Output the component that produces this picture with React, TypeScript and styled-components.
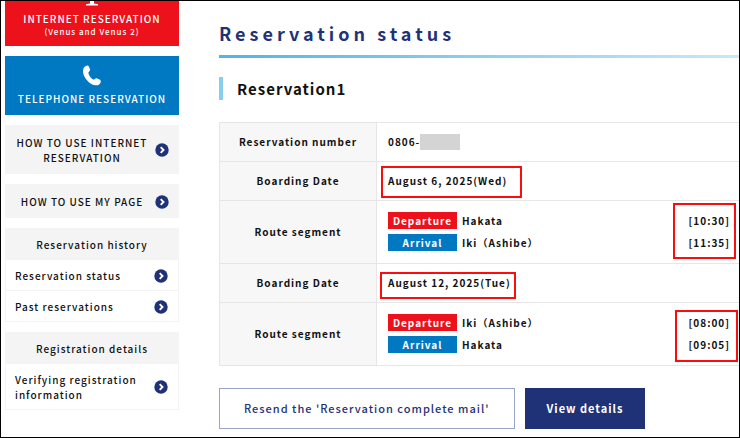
import React from "react";
import styled, { createGlobalStyle } from "styled-components";

const navy = "#1f3278";
const red = "#ec111a";
const blue = "#0079c2";
const grey = "#f4f4f4";
const line = "#e6e6e6";

const GlobalStyle = createGlobalStyle`
  *, *::before, *::after { box-sizing: border-box; }
  body {
    margin: 0;
    background: #fff;
    color: #111;
    font-family: "Noto Sans CJK JP", "Noto Sans", sans-serif;
    font-size: 10px;
    font-weight: 500;
    line-height: 15px;
    letter-spacing: 1px;
  }
  h1, h2, h3, ul { margin: 0; padding: 0; }
  a { color: inherit; text-decoration: none; }
`;

const Frame = styled.div`
  display: flex;
  gap: 40px;
  height: 100vh;
  padding-left: 4px;
  overflow: hidden;
  border: 1px solid #000;
`;

const Sidebar = styled.nav`
  display: flex;
  flex: none;
  flex-direction: column;
  gap: 10px;
  width: 174px;
`;

const Banner = styled.a<{ $color: string; $top: number }>`
  display: flex;
  flex-direction: column;
  align-items: center;
  gap: 5px;
  padding: ${(p) => p.$top}px 0 9px;
  background: ${(p) => p.$color};
  color: #fff;
  text-align: center;
  white-space: nowrap;
`;

const BannerNote = styled.small`
  display: block;
  font-size: 8px;
  line-height: 11px;
`;

const HelpLink = styled.a`
  display: flex;
  align-items: center;
  gap: 6px;
  padding: 10px 10px 9px;
  background: ${grey};
  text-align: center;
`;

const HelpText = styled.span`
  flex: 1;
`;

const MenuGroup = styled.section`
  border: 1px solid ${grey};
`;

const MenuTitle = styled.h3`
  padding: 8px 0;
  background: ${grey};
  font-size: 10px;
  font-weight: 500;
  text-align: center;
`;

const MenuList = styled.ul`
  list-style: none;
`;

const MenuItem = styled.li`
  & + & { border-top: 1px solid ${grey}; }
`;

const MenuLink = styled.a`
  display: flex;
  align-items: center;
  justify-content: space-between;
  padding: 8px 10px 7px 9px;
`;

const ArrowSvg = styled.svg`
  flex: none;
`;

const Main = styled.main`
  flex: 1;
  min-width: 0;
  padding-top: 18px;
`;

const Title = styled.h1`
  padding-bottom: 8px;
  border-bottom: 3px solid;
  border-image: linear-gradient(90deg, #4fb4e8, #c9e8f8) 1;
  color: ${navy};
  font-size: 18px;
  font-weight: 700;
  line-height: 28px;
  letter-spacing: 4px;
`;

const Subtitle = styled.h2`
  margin: 19px 0 22px;
  padding-left: 14px;
  border-left: 4px solid #87ceee;
  font-size: 15px;
  font-weight: 700;
  line-height: 23px;
`;

const Details = styled.table`
  width: 100%;
  border-collapse: collapse;
  border: 1px solid ${line};
  border-right: 0;
`;

const Label = styled.th`
  width: 157px;
  padding: 0 0 2px;
  border: 1px solid ${line};
  background: #f7f7f7;
  font-weight: 700;
`;

const Value = styled.td<{ $tall?: boolean }>`
  padding: ${(p) => (p.$tall ? 11 : 10)}px 9px ${(p) => (p.$tall ? 12 : 11)}px 11px;
  border-top: 1px solid ${line};
  border-bottom: 1px solid ${line};
  font-weight: 700;
  line-height: 17px;
`;

const Code = styled.div`
  display: flex;
  align-items: center;
`;

const Masked = styled.span`
  width: 40px;
  height: 16px;
  background: #d5d4d5;
`;

const Segment = styled.div`
  display: flex;
  justify-content: space-between;
`;

const Stops = styled.div`
  display: grid;
  gap: 5px;
`;

const Stop = styled.div`
  display: flex;
  gap: 5px;
`;

const Badge = styled.span<{ $color: string }>`
  width: 69px;
  background: ${(p) => p.$color};
  color: #fff;
  text-align: center;
`;

const Marked = styled.div`
  position: relative;
  width: fit-content;
`;

const Times = styled(Marked)`
  display: grid;
  gap: 5px;
`;

const Mark = styled.span<{ $inset: string }>`
  position: absolute;
  inset: ${(p) => p.$inset};
  border: 2px solid #fb0d0d;
`;

const Actions = styled.div`
  display: flex;
  gap: 10px;
  margin-top: 22px;
`;

const Button = styled.button<{ $filled?: boolean }>`
  padding: 0 ${(p) => (p.$filled ? 21 : 24)}px;
  border: 1px solid ${(p) => (p.$filled ? navy : "#9aa3c8")};
  background: ${(p) => (p.$filled ? navy : "#fff")};
  color: ${(p) => (p.$filled ? "#fff" : navy)};
  font: inherit;
  font-size: 11px;
  font-weight: ${(p) => (p.$filled ? 700 : 500)};
  line-height: 39px;
  letter-spacing: inherit;
  white-space: nowrap;
`;

const Arrow = () => (
  <ArrowSvg width="14" height="14" viewBox="0 0 14 14" aria-hidden="true">
    <circle cx="7" cy="7" r="6.7" fill={navy} />
    <path d="M5.7 4.2 8.5 7 5.7 9.8" fill="none" stroke="#fff" strokeWidth="1.9" />
  </ArrowSvg>
);

const StandIcon = () => (
  <svg width="14" height="5" viewBox="0 0 14 5" aria-hidden="true">
    <path d="M5 0h4v2.400l4 .8V4.500H1V3.200l4-.8z" fill="#fff" />
  </svg>
);

const PhoneIcon = () => (
  <svg width="20" height="21" viewBox="0 0 20 21" aria-hidden="true">
    <path
      d="M4 .9Q5.800 0 6.900 1.400L8 4.200Q8.300 5.600 7 6.700Q6.100 7.400 6.500 8.700Q7.600 12 10.600 14.200Q11.700 15 12.600 14.200Q13.900 13 15.300 13.500L18 14.700Q19.400 15.700 18.600 17.400Q17.300 20.500 13.800 20.300C7.800 19.900 1.200 12.800 1 6.200Q.9 2.300 4 .9z"
      fill="#fff"
    />
  </svg>
);

type Leg = { from: string; to: string; departs: string; arrives: string; mark: string };

const Route = ({ leg }: { leg: Leg }) => (
  <tr>
    <Label scope="row">Route segment</Label>
    <Value $tall>
      <Segment>
        <Stops>
          <Stop>
            <Badge $color={red}>Departure</Badge>
            {leg.from}
          </Stop>
          <Stop>
            <Badge $color={blue}>Arrival</Badge>
            {leg.to}
          </Stop>
        </Stops>
        <Times>
          <span>[{leg.departs}]</span>
          <span>[{leg.arrives}]</span>
          <Mark $inset={leg.mark} />
        </Times>
      </Segment>
    </Value>
  </tr>
);

const Boarding = ({ date, mark }: { date: string; mark: string }) => (
  <tr>
    <Label scope="row">Boarding Date</Label>
    <Value>
      <Marked>
        {date}
        <Mark $inset={mark} />
      </Marked>
    </Value>
  </tr>
);

export default function App() {
  return (
    <>
      <GlobalStyle />
      <Frame>
        <Sidebar>
          <Banner href="#internet" $color={red} $top={0}>
            <StandIcon />
            <span>
              INTERNET RESERVATION
              <BannerNote>(Venus and Venus 2)</BannerNote>
            </span>
          </Banner>
          <Banner href="#telephone" $color={blue} $top={9}>
            <PhoneIcon />
            TELEPHONE RESERVATION
          </Banner>
          <HelpLink href="#help-internet">
            <HelpText>HOW TO USE INTERNET RESERVATION</HelpText>
            <Arrow />
          </HelpLink>
          <HelpLink href="#help-mypage">
            <HelpText>HOW TO USE MY PAGE</HelpText>
            <Arrow />
          </HelpLink>
          <MenuGroup>
            <MenuTitle>Reservation history</MenuTitle>
            <MenuList>
              <MenuItem>
                <MenuLink href="#status">
                  Reservation status
                  <Arrow />
                </MenuLink>
              </MenuItem>
              <MenuItem>
                <MenuLink href="#past">
                  Past reservations
                  <Arrow />
                </MenuLink>
              </MenuItem>
            </MenuList>
          </MenuGroup>
          <MenuGroup>
            <MenuTitle>Registration details</MenuTitle>
            <MenuList>
              <MenuItem>
                <MenuLink href="#registration">
                  Verifying registration information
                  <Arrow />
                </MenuLink>
              </MenuItem>
            </MenuList>
          </MenuGroup>
        </Sidebar>
        <Main>
          <Title>Reservation status</Title>
          <Subtitle>Reservation1</Subtitle>
          <Details>
            <tbody>
              <tr>
                <Label scope="row">Reservation number</Label>
                <Value>
                  <Code>
                    0806-
                    <Masked />
                  </Code>
                </Value>
              </tr>
              <Boarding date="August 6, 2025(Wed)" mark="-6px -15px -9px -7px" />
              <Route leg={{ from: "Hakata", to: "Iki（Ashibe）", departs: "10:30", arrives: "11:35", mark: "-9px -6px -8px -16px" }} />
              <Boarding date="August 12, 2025(Tue)" mark="-2px -5px -8px -8px" />
              <Route leg={{ from: "Iki（Ashibe）", to: "Hakata", departs: "08:00", arrives: "09:05", mark: "-4px -8px -9px -14px" }} />
            </tbody>
          </Details>
          <Actions>
            <Button type="button">Resend the 'Reservation complete mail'</Button>
            <Button type="button" $filled>View details</Button>
          </Actions>
        </Main>
      </Frame>
    </>
  );
}
